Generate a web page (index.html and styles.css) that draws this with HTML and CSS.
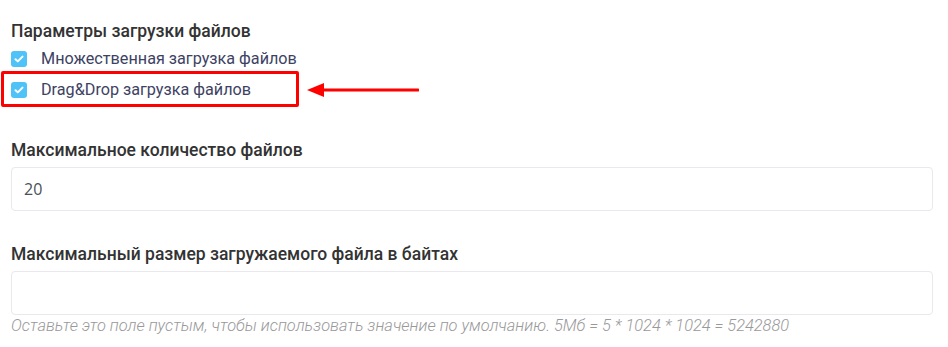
FILE: index.html
```html
<!DOCTYPE html>
<html lang="ru">
<head>
    <meta charset="UTF-8">
    <meta name="viewport" content="width=device-width, initial-scale=1.0">
    <title>Параметры загрузки файлов</title>
    <link rel="stylesheet" href="styles.css">
</head>
<body>
    <div class="settings">
        <div class="group-title">Параметры загрузки файлов</div>
        <div class="check-list">
            <label class="check-row">
                <input type="checkbox" checked>
                <span class="check-box">
                    <svg viewBox="0 0 16 16" width="16" height="16"><path d="M4.5 8.2l2.3 2.2 4.7-4.8" fill="none" stroke="#fff" stroke-width="2" stroke-linecap="round" stroke-linejoin="round"/></svg>
                </span>
                <span>Множественная загрузка файлов</span>
            </label>
            <label class="check-row highlighted">
                <input type="checkbox" checked>
                <span class="check-box">
                    <svg viewBox="0 0 16 16" width="16" height="16"><path d="M4.5 8.2l2.3 2.2 4.7-4.8" fill="none" stroke="#fff" stroke-width="2" stroke-linecap="round" stroke-linejoin="round"/></svg>
                </span>
                <span>Drag&amp;Drop загрузка файлов</span>
                <span class="mark-box"></span>
                <svg class="mark-arrow" viewBox="0 0 112 16" width="112" height="16">
                    <path d="M16 8H111" stroke="#f00" stroke-width="3" stroke-linecap="round"/>
                    <path d="M0 8L17 1V15Z" fill="#f00"/>
                </svg>
            </label>
        </div>

        <div class="form-group first">
            <label for="maxFiles">Максимальное количество файлов</label>
            <input type="text" id="maxFiles" value="20">
        </div>

        <div class="form-group">
            <label for="maxSize">Максимальный размер загружаемого файла в байтах</label>
            <input type="text" id="maxSize" value="">
            <div class="hint">Оставьте это поле пустым, чтобы использовать значение по умолчанию. 5Мб = 5 * 1024 * 1024 = 5242880</div>
        </div>
    </div>
</body>
</html>
```

FILE: styles.css
```css
* {
    margin: 0;
    padding: 0;
    box-sizing: border-box;
}

body {
    background-color: #fff;
    font-family: Roboto, "Noto Sans", sans-serif;
    color: #333;
}

.settings {
    padding: 21px 15px 0 11px;
}

.group-title {
    font-size: 17.5px;
    font-weight: 500;
    line-height: 20px;
    color: #333;
}

.check-list {
    margin-top: 2px;
}

.check-row {
    position: relative;
    display: flex;
    align-items: center;
    height: 31px;
    gap: 14px;
    font-size: 16.2px;
    color: #3d4263;
    cursor: pointer;
}

.check-row input {
    display: none;
}

.check-box {
    width: 16px;
    height: 16px;
    border-radius: 3px;
    background-color: #4fc3f7;
    display: flex;
}

.mark-box {
    position: absolute;
    left: -10px;
    top: -3px;
    width: 298px;
    height: 36px;
    border: 3px solid #f00;
    border-radius: 2px;
}

.mark-arrow {
    position: absolute;
    left: 296px;
    top: 8px;
}

.form-group {
    margin-top: 33px;
}

.form-group.first {
    margin-top: 35px;
}

.form-group label {
    display: block;
    font-size: 17.5px;
    font-weight: 500;
    line-height: 20px;
    color: #333;
    margin-bottom: 7px;
}

.form-group input {
    width: 100%;
    height: 44px;
    padding: 0 12px;
    border: 1px solid #e8e8ee;
    border-radius: 4px;
    font-family: "Open Sans", sans-serif;
    font-size: 16px;
    color: #495057;
    outline: none;
}

.hint {
    margin-top: 2px;
    font-size: 16.4px;
    line-height: 18px;
    font-style: italic;
    font-weight: 300;
    color: #999;
}
```
